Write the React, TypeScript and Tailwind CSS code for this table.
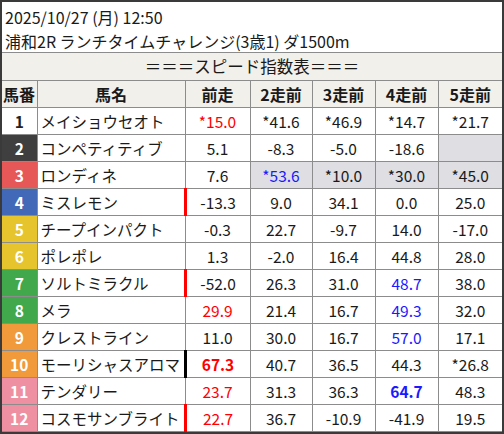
import React from "react";

type Cell = { v: string; c?: "red" | "blue" | "redb" | "blueb"; gray?: boolean };
type Row = { no: number; name: string; bg: string; fg: string; mark?: "red" | "black"; cells: Cell[] };

const rows: Row[] = [
  { no: 1, name: "メイショウセオト", bg: "bg-white", fg: "text-[#222]", cells: [{ v: "*15.0", c: "red" }, { v: "*41.6" }, { v: "*46.9" }, { v: "*14.7" }, { v: "*21.7" }] },
  { no: 2, name: "コンペティティブ", bg: "bg-[#3f3f3f]", fg: "text-white", cells: [{ v: "5.1" }, { v: "-8.3" }, { v: "-5.0" }, { v: "-18.6" }, { v: "", gray: true }] },
  { no: 3, name: "ロンディネ", bg: "bg-[#e65757]", fg: "text-white", cells: [{ v: "7.6" }, { v: "*53.6", c: "blue", gray: true }, { v: "*10.0", gray: true }, { v: "*30.0", gray: true }, { v: "*45.0", gray: true }] },
  { no: 4, name: "ミスレモン", bg: "bg-[#4169b8]", fg: "text-white", mark: "red", cells: [{ v: "-13.3" }, { v: "9.0" }, { v: "34.1" }, { v: "0.0" }, { v: "25.0" }] },
  { no: 5, name: "チープインパクト", bg: "bg-[#e6c42e]", fg: "text-white", cells: [{ v: "-0.3" }, { v: "22.7" }, { v: "-9.7" }, { v: "14.0" }, { v: "-17.0" }] },
  { no: 6, name: "ポレポレ", bg: "bg-[#e6c42e]", fg: "text-white", cells: [{ v: "1.3" }, { v: "-2.0" }, { v: "16.4" }, { v: "44.8" }, { v: "28.0" }] },
  { no: 7, name: "ソルトミラクル", bg: "bg-[#41a84c]", fg: "text-white", mark: "red", cells: [{ v: "-52.0" }, { v: "26.3" }, { v: "31.0" }, { v: "48.7", c: "blue" }, { v: "38.0" }] },
  { no: 8, name: "メラ", bg: "bg-[#41a84c]", fg: "text-white", cells: [{ v: "29.9", c: "red" }, { v: "21.4" }, { v: "16.7" }, { v: "49.3", c: "blue" }, { v: "32.0" }] },
  { no: 9, name: "クレストライン", bg: "bg-[#f09a3c]", fg: "text-white", cells: [{ v: "11.0" }, { v: "30.0" }, { v: "16.7" }, { v: "57.0", c: "blue" }, { v: "17.1" }] },
  { no: 10, name: "モーリシャスアロマ", bg: "bg-[#f09a3c]", fg: "text-white", mark: "black", cells: [{ v: "67.3", c: "redb" }, { v: "40.7" }, { v: "36.5" }, { v: "44.3" }, { v: "*26.8" }] },
  { no: 11, name: "テンダリー", bg: "bg-[#ef90a2]", fg: "text-white", cells: [{ v: "23.7", c: "red" }, { v: "31.3" }, { v: "36.3" }, { v: "64.7", c: "blueb" }, { v: "48.3" }] },
  { no: 12, name: "コスモサンブライト", bg: "bg-[#ef90a2]", fg: "text-white", mark: "red", cells: [{ v: "22.7", c: "red" }, { v: "36.7" }, { v: "-10.9" }, { v: "-41.9" }, { v: "19.5" }] },
];

const colorClass = {
  red: "text-[#ff0000]",
  blue: "text-[#1a1aff]",
  redb: "text-[#ff0000] font-bold",
  blueb: "text-[#1a1aff] font-bold",
};

const heads = ["馬番", "馬名", "前走", "2走前", "3走前", "4走前", "5走前"];

export default function App() {
  return (
    <div
      className="w-[504px] h-[434px] bg-white border-2 border-[#3a3a3a] text-[#1a1a1a] overflow-hidden"
      style={{ fontFamily: '"Noto Sans CJK JP", "Noto Sans", sans-serif' }}
    >
      <div className="h-[51px] pl-[3px] pt-[3px] border-b border-[#8c8c8c] text-[16px] leading-[24px]">
        <p>2025/10/27 (月) 12:50</p>
        <p>浦和2R ランチタイムチャレンジ(3歳1) ダ1500m</p>
      </div>
      <table className="w-[500px] table-fixed border-collapse text-[15.5px]">
        <colgroup>
          <col className="w-[35px]" />
          <col className="w-[148px]" />
          <col className="w-[65px]" />
          <col className="w-[62px]" />
          <col className="w-[63px]" />
          <col className="w-[63px]" />
          <col className="w-[64px]" />
        </colgroup>
        <thead>
          <tr className="h-[27px] bg-[#f2f0eb]">
            <td colSpan={7} className="text-center text-[16.5px] border-b border-[#8c8c8c] p-0 leading-[26px]">
              ＝＝＝スピード指数表＝＝＝
            </td>
          </tr>
          <tr className="h-[27px] bg-[#f2f0eb]">
            {heads.map((h, i) => (
              <th
                key={h}
                className={`font-bold text-[16px] p-0 leading-[26px] border-b border-[#8c8c8c] ${i < 6 ? "border-r" : ""} ${i === 0 ? "text-left pl-[1px]" : "text-center"}`}
              >
                {h}
              </th>
            ))}
          </tr>
        </thead>
        <tbody>
          {rows.map((r) => (
            <tr key={r.no} className="h-[27px]">
              <td className={`${r.bg} ${r.fg} font-bold text-center p-0 leading-[26px] border-r border-b border-[#8c8c8c]`}>
                {r.no}
              </td>
              <td className="p-0 leading-[26px] whitespace-nowrap overflow-hidden border-r border-b border-[#8c8c8c]">
                <span className="pl-[3px]">{r.name}</span>
              </td>
              {r.cells.map((c, i) => (
                <td
                  key={i}
                  className={`text-center p-0 leading-[26px] border-b border-[#8c8c8c] ${i < 4 ? "border-r" : ""} ${c.gray ? "bg-[#dedee3]" : ""} ${c.c ? colorClass[c.c] : ""} ${
                    i === 0 && r.mark === "red" ? "border-l-[3px] border-l-[#ff0000]" : ""
                  } ${i === 0 && r.mark === "black" ? "border-l-[3px] border-l-black" : ""}`}
                >
                  {c.v}
                </td>
              ))}
            </tr>
          ))}
        </tbody>
      </table>
    </div>
  );
}
